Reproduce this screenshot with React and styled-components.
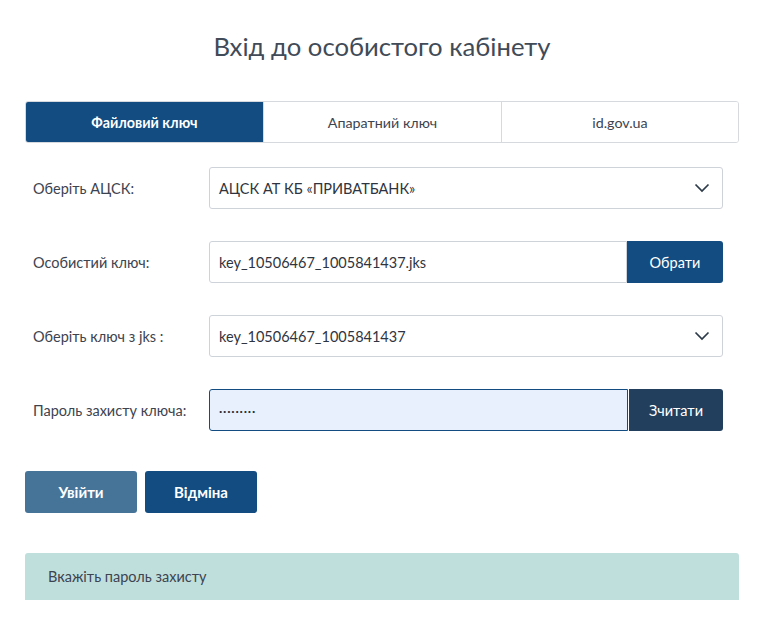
import React from "react";
import styled, { createGlobalStyle } from "styled-components";

const Global = createGlobalStyle`
  html, body { margin: 0; padding: 0; background: #fff; }
  body { font-family: Lato, "Open Sans", sans-serif; color: #3d4450; }
  * { box-sizing: border-box; }
`;

const Page = styled.div`
  padding: 30px 21px 20px 25px;
  width: 760px;
`;

const Title = styled.h1`
  margin: 0 0 39px;
  text-align: center;
  font-size: 25.7px;
  font-weight: 400;
  line-height: 32px;
  color: #414b58;
`;

const Tabs = styled.div`
  display: grid;
  grid-template-columns: 237px 238px 1fr;
  height: 42px;
  border: 1px solid #d6dade;
  border-radius: 3px;
  overflow: hidden;
  margin-bottom: 24px;
`;

const Tab = styled.div`
  display: flex;
  align-items: center;
  justify-content: center;
  font-size: 14.3px;
  font-weight: ${(p) => (p.$active ? 700 : 400)};
  color: ${(p) => (p.$active ? "#fff" : "#3d4450")};
  background: ${(p) => (p.$active ? "#124c80" : "#fff")};
  border-left: ${(p) => (p.$first ? "none" : "1px solid #d6dade")};
`;

const Form = styled.div`
  display: flex;
  flex-direction: column;
  gap: 32px;
`;

const Row = styled.div`
  display: grid;
  grid-template-columns: 184px 514px;
  align-items: center;
`;

const Label = styled.label`
  padding-left: 8px;
  font-size: 14.5px;
  color: #3d4450;
`;

const Field = styled.div`
  position: relative;
  display: flex;
  height: 42px;
  align-items: center;
  padding: 0 9px;
  border: 1px solid ${(p) => (p.$focus ? "#124c80" : "#ced3d9")};
  border-radius: 3px;
  background: ${(p) => (p.$focus ? "#e8f0fe" : "#fff")};
  font-size: 14.5px;
  color: #2f3540;
  flex: 1;
  min-width: 0;
`;

const Group = styled.div`
  display: flex;
  height: 42px;
`;

const JoinedField = styled(Field)`
  border-radius: 3px 0 0 3px;
`;

const Addon = styled.button`
  width: ${(p) => p.$w || 95}px;
  height: 42px;
  border: none;
  border-radius: 0 3px 3px 0;
  background: ${(p) => p.$bg};
  color: #fff;
  font-family: inherit;
  font-size: 14.5px;
  font-weight: ${(p) => p.$weight || 400};
  margin-left: ${(p) => p.$gap || 0}px;
`;

const Chevron = styled.svg`
  position: absolute;
  right: 12px;
  top: 50%;
  transform: translateY(-50%);
`;

const Dots = styled.span`
  font-size: 14px;
  font-weight: 700;
  letter-spacing: 0.8px;
  position: relative;
  top: -3px;
  color: #2a2f38;
`;

const Actions = styled.div`
  display: flex;
  gap: 8px;
  margin-top: 40px;
`;

const Btn = styled.button`
  width: 112px;
  height: 42px;
  border: none;
  border-radius: 3px;
  background: ${(p) => p.$bg};
  color: #fff;
  font-family: inherit;
  font-size: 15px;
  font-weight: 700;
`;

const Alert = styled.div`
  margin-top: 40px;
  height: 47px;
  display: flex;
  align-items: center;
  padding-left: 23px;
  background: #bfdfdd;
  border-radius: 3px 3px 0 0;
  font-size: 14.5px;
  color: #3d4450;
`;

const Select = ({ children }) => (
  <Field>
    {children}
    <Chevron width="16" height="10" viewBox="0 0 16 10">
      <path d="M1.5 1.5 L8 8 L14.5 1.5" fill="none" stroke="#2c3a4a" strokeWidth="1.7" />
    </Chevron>
  </Field>
);

export default function App() {
  return (
    <Page>
      <Global />
      <Title>Вхід до особистого кабінету</Title>
      <Tabs>
        <Tab $active $first>Файловий ключ</Tab>
        <Tab>Апаратний ключ</Tab>
        <Tab>id.gov.ua</Tab>
      </Tabs>
      <Form>
        <Row>
          <Label>Оберіть АЦСК:</Label>
          <Select>АЦСК АТ КБ «ПРИВАТБАНК»</Select>
        </Row>
        <Row>
          <Label>Особистий ключ:</Label>
          <Group>
            <JoinedField>key_10506467_1005841437.jks</JoinedField>
            <Addon $bg="#124c80" $w={96}>Обрати</Addon>
          </Group>
        </Row>
        <Row>
          <Label>Оберіть ключ з jks :</Label>
          <Select>key_10506467_1005841437</Select>
        </Row>
        <Row>
          <Label>Пароль захисту ключа:</Label>
          <Group>
            <JoinedField $focus>
              <Dots>.........</Dots>
            </JoinedField>
            <Addon $bg="#233f5e" $w={94} $gap={1}>Зчитати</Addon>
          </Group>
        </Row>
      </Form>
      <Actions>
        <Btn $bg="#467499">Увійти</Btn>
        <Btn $bg="#124c80">Відміна</Btn>
      </Actions>
      <Alert>Вкажіть пароль захисту</Alert>
    </Page>
  );
}
